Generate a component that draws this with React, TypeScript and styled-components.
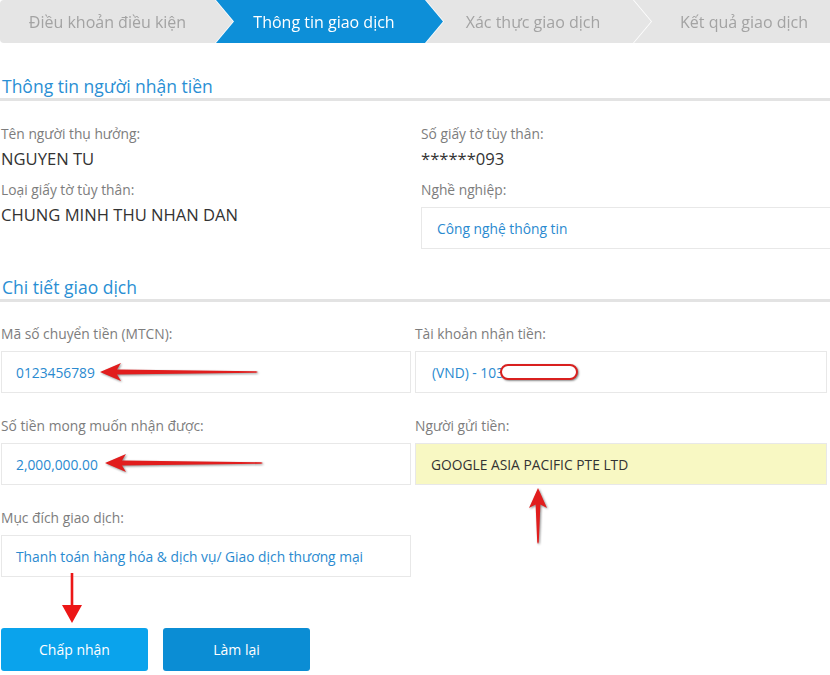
import React from 'react';
import styled, { createGlobalStyle } from 'styled-components';

const GlobalStyle = createGlobalStyle`
  html, body {
    margin: 0;
    padding: 0;
    background: #fff;
  }
  body {
    font-family: 'Open Sans', 'Noto Sans', 'DejaVu Sans', sans-serif;
    overflow: hidden;
  }
`;

const Page = styled.div`
  position: relative;
  width: 830px;
  height: 675px;
  overflow: hidden;
`;

const Steps = styled.div`
  display: flex;
  height: 43px;
  overflow: hidden;
`;

const StepWrap = styled.div<{ $w: number; $z: number; $last: boolean }>`
  position: relative;
  z-index: ${({ $z }) => $z};
  flex: 0 0 ${({ $w }) => $w}px;
  margin-right: ${({ $last }) => ($last ? '0' : '-18px')};
  filter: drop-shadow(1.5px 0 0 #fff);
`;

const StepShape = styled.div<{ $active: boolean; $first: boolean; $last: boolean }>`
  height: 100%;
  box-sizing: border-box;
  display: flex;
  align-items: center;
  justify-content: center;
  padding-left: ${({ $first }) => ($first ? '0' : '8px')};
  padding-right: ${({ $last }) => ($last ? '0' : '18px')};
  background: ${({ $active }) => ($active ? '#0d8fd8' : '#e5e5e5')};
  color: ${({ $active }) => ($active ? '#fff' : '#a3a3a3')};
  font-size: 16px;
  border-radius: ${({ $first }) => ($first ? '4px 0 0 4px' : '0')};
  clip-path: ${({ $last }) =>
    $last
      ? 'none'
      : 'polygon(0 0, calc(100% - 18px) 0, 100% 50%, calc(100% - 18px) 100%, 0 100%)'};
  white-space: nowrap;
`;

const SectionTitle = styled.h2<{ $top: number }>`
  margin: ${({ $top }) => $top}px 0 0;
  padding-left: 2px;
  font-size: 17.5px;
  line-height: 24px;
  font-weight: 400;
  color: #2a8fd4;
  border-bottom: 3px solid #e3e3e3;
`;

const InfoGrid = styled.div`
  display: grid;
  grid-template-columns: 420px 1fr;
  margin-top: 23px;
  padding-left: 1px;
`;

const Column = styled.div`
  display: flex;
  flex-direction: column;
  gap: 10px;
`;

const Field = styled.div<{ $gap: number }>`
  display: flex;
  flex-direction: column;
  gap: ${({ $gap }) => $gap}px;
`;

const Label = styled.div`
  font-size: 13.8px;
  line-height: 20px;
  color: #7d7d7d;
`;

const Value = styled.div`
  font-size: 16.6px;
  line-height: 22px;
  color: #333;
`;

const Box = styled.div<{ $highlight?: boolean; $wide?: boolean; $pad?: number }>`
  box-sizing: border-box;
  height: 42px;
  width: ${({ $wide }) => ($wide ? '430px' : '100%')};
  display: flex;
  align-items: center;
  padding-left: ${({ $pad }) => $pad ?? 15}px;
  border: 1px solid #e8e8e8;
  background: ${({ $highlight }) => ($highlight ? '#f8f8c3' : '#fff')};
  color: ${({ $highlight }) => ($highlight ? '#333' : '#2a8ad0')};
  font-size: 13.8px;
  white-space: nowrap;
`;

const DetailGrid = styled.div`
  display: grid;
  grid-template-columns: 410px 412px;
  column-gap: 4px;
  row-gap: 23px;
  margin-top: 22px;
  padding-left: 1px;
`;

const Actions = styled.div`
  display: flex;
  gap: 15px;
  margin-top: 51px;
  padding-left: 1px;
`;

const Button = styled.button<{ $primary?: boolean }>`
  width: 147px;
  height: 43px;
  border: none;
  border-radius: 3px;
  background: ${({ $primary }) => ($primary ? '#0aa3ec' : '#0b8dd4')};
  color: #fff;
  font-family: inherit;
  font-size: 14px;
  cursor: pointer;
`;

const Overlay = styled.svg`
  position: absolute;
  overflow: visible;
`;

const Redaction = styled.div`
  position: absolute;
  left: 500px;
  top: 364px;
  width: 74px;
  height: 12px;
  border: 2px solid #d9201f;
  border-radius: 10px;
  background: #fff;
  box-shadow: 1px 1px 2px rgba(0, 0, 0, 0.45);
`;

const steps = [
  { label: 'Điều khoản điều kiện', w: 233 },
  { label: 'Thông tin giao dịch', w: 228, active: true },
  { label: 'Xác thực giao dịch', w: 226 },
  { label: 'Kết quả giao dịch', w: 214 },
];

const LeftArrow = ({ x, y, len }: { x: number; y: number; len: number }) => (
  <Overlay
    style={{ left: x, top: y, filter: 'drop-shadow(1px 1px 1px rgba(0,0,0,0.45))' }}
    width={len}
    height={18}
    viewBox={`0 0 ${len} 18`}
  >
    <polygon
      points={`0,9 21,0 17,6.6 ${len - 2},8.2 ${len},9 ${len - 2},9.8 17,11.4 21,18`}
      fill="#e11d1d"
    />
  </Overlay>
);

const App: React.FC = () => {
  return (
    <Page>
      <GlobalStyle />
      <Steps>
        {steps.map((s, i) => (
          <StepWrap key={s.label} $w={s.w} $z={10 - i} $last={i === steps.length - 1}>
            <StepShape
              $active={!!s.active}
              $first={i === 0}
              $last={i === steps.length - 1}
            >
              {s.label}
            </StepShape>
          </StepWrap>
        ))}
      </Steps>

      <SectionTitle $top={31}>Thông tin người nhận tiền</SectionTitle>
      <InfoGrid>
        <Column>
          <Field $gap={4}>
            <Label>Tên người thụ hưởng:</Label>
            <Value>NGUYEN TU</Value>
          </Field>
          <Field $gap={4}>
            <Label>Loại giấy tờ tùy thân:</Label>
            <Value>CHUNG MINH THU NHAN DAN</Value>
          </Field>
        </Column>
        <Column>
          <Field $gap={4}>
            <Label>Số giấy tờ tùy thân:</Label>
            <Value>******093</Value>
          </Field>
          <Field $gap={7}>
            <Label>Nghề nghiệp:</Label>
            <Box $wide>Công nghệ thông tin</Box>
          </Field>
        </Column>
      </InfoGrid>

      <SectionTitle $top={26}>Chi tiết giao dịch</SectionTitle>
      <DetailGrid>
        <Field $gap={7}>
          <Label>Mã số chuyển tiền (MTCN):</Label>
          <Box $pad={14}>0123456789</Box>
        </Field>
        <Field $gap={7}>
          <Label>Tài khoản nhận tiền:</Label>
          <Box $pad={16}>(VND) - 103</Box>
        </Field>
        <Field $gap={7}>
          <Label>Số tiền mong muốn nhận được:</Label>
          <Box $pad={14}>2,000,000.00</Box>
        </Field>
        <Field $gap={7}>
          <Label>Người gửi tiền:</Label>
          <Box $highlight $pad={15}>GOOGLE ASIA PACIFIC PTE LTD</Box>
        </Field>
        <Field $gap={7}>
          <Label>Mục đích giao dịch:</Label>
          <Box $pad={14}>Thanh toán hàng hóa &amp; dịch vụ/ Giao dịch thương mại</Box>
        </Field>
      </DetailGrid>

      <Actions>
        <Button $primary>Chấp nhận</Button>
        <Button>Làm lại</Button>
      </Actions>

      {/* annotations drawn over the screenshot */}
      <Redaction />
      <LeftArrow x={100} y={363} len={158} />
      <LeftArrow x={105} y={454} len={158} />
      <Overlay
        style={{ left: 529, top: 488, filter: 'drop-shadow(1px 1px 1px rgba(0,0,0,0.45))' }}
        width={18}
        height={56}
        viewBox="0 0 18 56"
      >
        <polygon points="9,0 18,20 11.4,16.5 9.8,54 9,56 8.2,54 6.6,16.5 0,20" fill="#e11d1d" />
      </Overlay>
      <Overlay style={{ left: 62, top: 573 }} width={20} height={50} viewBox="0 0 20 50">
        <polygon points="8.7,0 11.3,0 11.3,32 20,32 10,50 0,32 8.7,32" fill="#ec1616" />
      </Overlay>
    </Page>
  );
};

export default App;
